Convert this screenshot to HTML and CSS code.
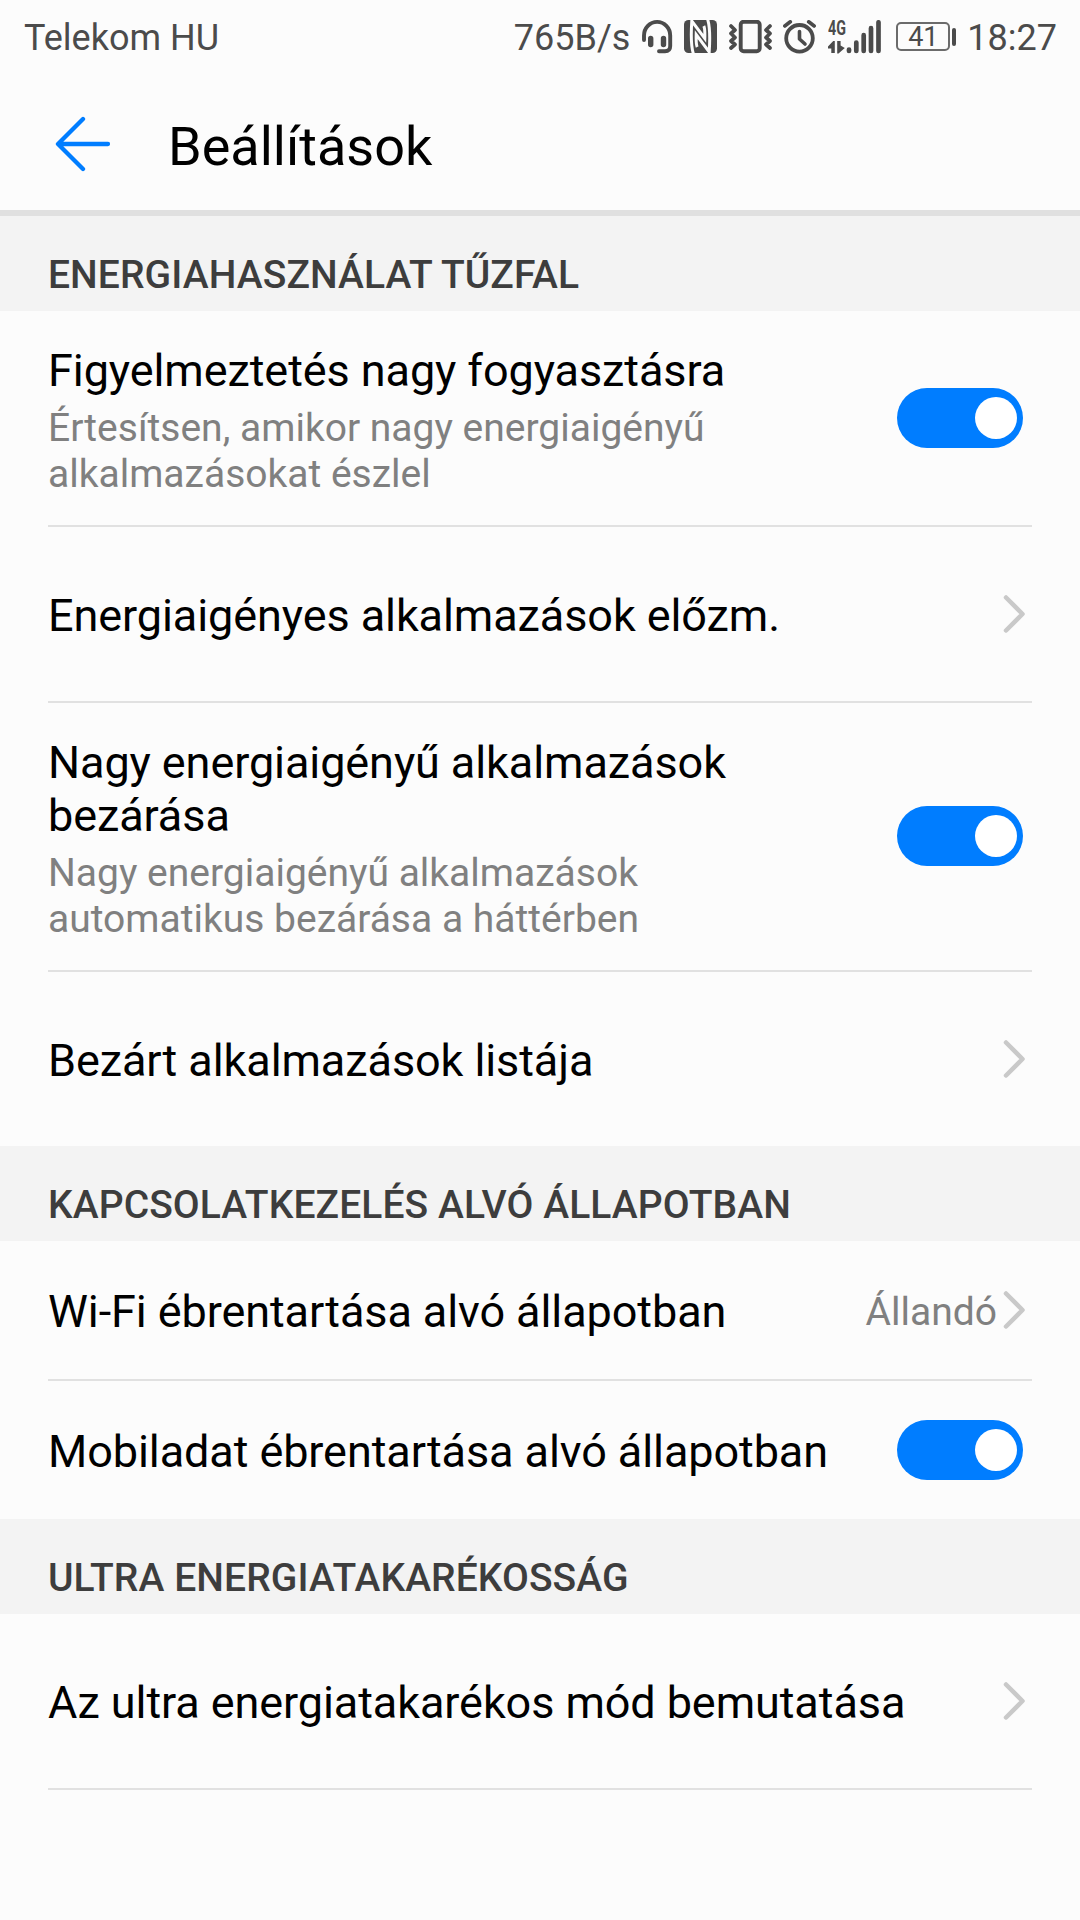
FILE: index.html
```html
<!DOCTYPE html>
<html lang="hu">
<head>
<meta charset="utf-8">
<title>Beállítások</title>
<link rel="stylesheet" href="styles.css">
</head>
<body>
<header class="status">
  <span class="carrier">Telekom HU</span>
  <span class="speed">765B/s</span>
  <svg class="ico headset" width="32" height="36" viewBox="641 19 32 36"><path d="M644 40V35.500A13 13.500 0 0 1 670.200 35.500V46Q670.200 51.200 665 51.200H659" fill="none" stroke="#4b4b4b" stroke-width="3.900" stroke-linecap="round"/><path d="M650.700 38.500V44.500M663.500 38.500V44.500" stroke="#4b4b4b" stroke-width="5.400" stroke-linecap="round"/></svg>
  <svg class="ico nfc" width="34" height="34" viewBox="0 0 34 34"><rect x="0" y="0" width="33" height="33" rx="4.500" fill="#4b4b4b"/><path d="M9.300 33.500C7 26 7 13 7.800 1L20.800 18.500C21 12 20.800 8 19.800 6M23.700 -.5C26 7 26 20 25.200 32L12.200 14.500C12 21 12.200 25 13.200 27" fill="none" stroke="#fcfcfc" stroke-width="3"/></svg>
  <svg class="ico vibrate" width="43" height="34" viewBox="0 0 43 34"><g fill="none" stroke="#4b4b4b"><rect x="11.700" y="1.700" width="19" height="29.600" rx="3" stroke-width="3.900"/><path d="M2 6L6 10L2 13.500L6 17.500L2 21L6 24.500L2 28M41 6L37 10L41 13.500L37 17.500L41 21L37 24.500L41 28" stroke-width="3.700" stroke-linejoin="round" stroke-linecap="round"/></g></svg>
  <svg class="ico alarm" width="34" height="34" viewBox="0 0 34 34"><g fill="none" stroke="#4b4b4b" stroke-linecap="round"><circle cx="16.500" cy="18.300" r="13.300" stroke-width="3.800"/><path d="M16.500 11.500V19L22 24" stroke-width="3.600" stroke-linejoin="round"/><path d="M1.800 6L7.300 1.800M31.200 6L25.700 1.800" stroke-width="3.600"/></g></svg>
  <span class="cell">
    <span class="net"><b>4G</b><svg width="17" height="13" viewBox="0 0 17 13"><path d="M6.800 0V12H3.300V7.500H0V5.500L5.200 0ZM9.200 0H12.600V4.500L16.800 7L10.500 12.500H9.200Z" fill="#4b4b4b"/></svg></span>
    <svg class="bars" width="36" height="34" viewBox="0 0 36 34"><path d="M4 29.500V31M11.300 22.500V31M18.700 15.200V31M26 8.200V31M33.500 2.300V31" stroke="#4b4b4b" stroke-width="4.700" stroke-linecap="round"/></svg>
  </span>
  <span class="battery"><span class="cellbody">41</span><i class="tip"></i></span>
  <span class="clock">18:27</span>
</header>
<nav class="bar">
  <svg width="56" height="56" viewBox="0 0 56 56"><path d="M28 3L3 28L28 53M3.500 28H53" fill="none" stroke="#007dff" stroke-width="4.300" stroke-linecap="round" stroke-linejoin="round"/></svg>
  <h1>Beállítások</h1>
</nav>
<main>
  <h2>ENERGIAHASZNÁLAT TŰZFAL</h2>
  <section>
    <div class="row h214"><div class="text"><p class="name">Figyelmeztetés nagy fogyasztásra</p><p class="note">Értesítsen, amikor nagy energiaigényű<br>alkalmazásokat észlel</p></div><span class="switch"></span></div>
    <div class="row h174"><div class="text"><p class="name">Energiaigényes alkalmazások előzm.</p></div><svg class="chev" width="24" height="40" viewBox="0 0 24 40"><path d="M4 3.500L20.500 20L4 36.500"/></svg></div>
    <div class="row h267"><div class="text"><p class="name">Nagy energiaigényű alkalmazások<br>bezárása</p><p class="note">Nagy energiaigényű alkalmazások<br>automatikus bezárása a háttérben</p></div><span class="switch"></span></div>
    <div class="row h174 last"><div class="text"><p class="name">Bezárt alkalmazások listája</p></div><svg class="chev" width="24" height="40" viewBox="0 0 24 40"><path d="M4 3.500L20.500 20L4 36.500"/></svg></div>
  </section>
  <h2>KAPCSOLATKEZELÉS ALVÓ ÁLLAPOTBAN</h2>
  <section>
    <div class="row h138"><div class="text"><p class="name">Wi-Fi ébrentartása alvó állapotban</p></div><span class="value">Állandó</span><svg class="chev" width="24" height="40" viewBox="0 0 24 40"><path d="M4 3.500L20.500 20L4 36.500"/></svg></div>
    <div class="row h138 last"><div class="text"><p class="name">Mobiladat ébrentartása alvó állapotban</p></div><span class="switch"></span></div>
  </section>
  <h2>ULTRA ENERGIATAKARÉKOSSÁG</h2>
  <section>
    <div class="row h174"><div class="text"><p class="name">Az ultra energiatakarékos mód bemutatása</p></div><svg class="chev" width="24" height="40" viewBox="0 0 24 40"><path d="M4 3.500L20.500 20L4 36.500"/></svg></div>
  </section>
</main>
</body>
</html>
```
FILE: styles.css
```css
* { box-sizing: border-box; margin: 0; padding: 0; }
body { width: 1080px; height: 1920px; background: #fcfcfc; color: #000; font-family: Roboto, sans-serif; overflow: hidden; white-space: nowrap; }
svg { display: block; flex: none; }

.status { display: flex; align-items: center; height: 73px; padding: 0 24px 0 24px; font-size: 36px; line-height: 42px; color: #4b4b4b; }
.carrier { flex: 1; padding-top: 3px; }
.speed { padding-top: 3px; margin-right: 11px; }
.nfc { margin-left: 11px; }
.vibrate { margin-left: 11px; }
.alarm { margin-left: 11px; }
.cell { display: flex; margin-left: 11px; height: 34px; }
.net { width: 17px; display: flex; flex-direction: column; justify-content: space-between; }
.net b { font: 700 21px/16px Roboto, sans-serif; transform: scaleX(.68); transform-origin: 0 0; }
.battery { display: flex; align-items: center; gap: 2px; margin-left: 15px; }
.cellbody { width: 54px; height: 29px; border: 2px solid #6b6b6b; border-radius: 5px; font-size: 27px; line-height: 27px; text-align: center; }
.tip { width: 4px; height: 18px; border-radius: 2px; background: #4b4b4b; }
.clock { margin-left: 11px; margin-right: -1px; padding-top: 3px; }

.bar { display: flex; align-items: center; gap: 57px; height: 143px; padding: 4px 55px 0 55px; border-bottom: 6px solid #e0e0e0; }
h1 { font-size: 54px; line-height: 64px; font-weight: 400; padding-top: 6px; }

h2 { height: 95px; padding: 36px 48px 0; background: #f3f3f3; color: #3d3d3d; font-size: 39px; line-height: 46px; font-weight: 500; letter-spacing: .08px; }
section { padding: 0 48px; }
.row { display: flex; align-items: center; box-sizing: content-box; border-bottom: 2px solid #e1e1e1; padding-right: 6px; }
.row.last { border-bottom: 0; }
.h214 { height: 214px; }
.h174 { height: 174px; }
.h267 { height: 267px; }
.h267 .switch { margin-bottom: 1px; }
.h138 { height: 138px; }
.text { flex: 1; padding-top: 3px; }
.name { font-size: 45px; line-height: 53px; letter-spacing: -.09px; }
.note { margin: 8px 0 -1px; font-size: 39px; line-height: 46px; color: #808080; }
.value { font-size: 39px; line-height: 46px; color: #808080; padding: 4px 5px 0 0; }
.switch { display: flex; justify-content: flex-end; align-items: center; width: 126px; height: 60px; margin-right: 3px; padding-right: 6px; border-radius: 30px; background: #007dff; }
.switch::after { content: ""; width: 42px; height: 42px; border-radius: 50%; background: #fff; }
.chev { fill: none; stroke: #c9c9c9; stroke-width: 4.500; stroke-linecap: round; stroke-linejoin: round; }
```
